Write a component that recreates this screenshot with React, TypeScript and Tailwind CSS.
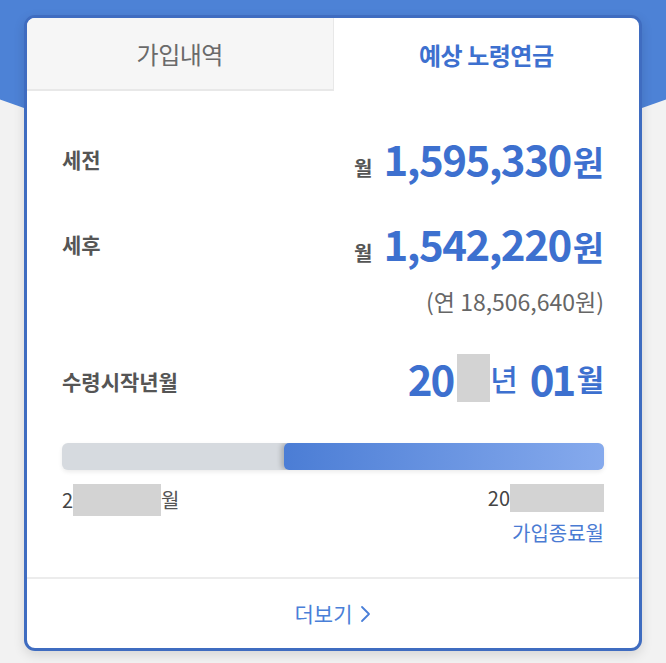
import React from "react";

const Masked = ({ className }: { className: string }) => (
  <span className={`inline-block bg-[#d3d3d3] ${className}`} />
);

export default function App() {
  return (
    <div
      className="relative w-[666px] h-[663px] overflow-hidden bg-[#f2f2f2]"
      style={{ fontFamily: '"Noto Sans CJK KR", "Noto Sans", sans-serif' }}
    >
      {/* blue header background with curved bottom */}
      <div className="absolute left-[-267px] top-[-516px] w-[1200px] h-[672px] rounded-[50%] bg-[#4d82d6]" />

      <div className="relative pt-[15px] px-[24px]">
        <div className="bg-white border-[3px] border-[#3f6cc0] rounded-[11px] overflow-hidden shadow-[0_4px_12px_rgba(0,0,0,0.12)]">
          {/* tabs */}
          <div className="flex h-[73px]">
            <div className="flex-1 flex items-center justify-center bg-[#f6f6f6] border-b-2 border-r border-[#e8e8e8] text-[24px] text-[#6a6a6a] tracking-[-0.5px]">
              가입내역
            </div>
            <div className="flex-1 flex items-center justify-center text-[24px] font-bold text-[#3d70cf] tracking-[-0.5px]">
              예상 노령연금
            </div>
          </div>

          <div className="px-[35px] pt-[44px]">
            {/* 세전 */}
            <div className="flex items-center justify-between h-[50px]">
              <span className="text-[21px] font-bold text-[#555]">세전</span>
              <div className="flex items-baseline text-[#3d70cf] font-bold">
                <span className="text-[20px] text-[#555] mr-[11px]">월</span>
                <span className="text-[42px] leading-none tracking-[-1.5px]">1,595,330</span>
                <span className="text-[34px] leading-none ml-[2px]">원</span>
              </div>
            </div>

            {/* 세후 */}
            <div className="flex items-center justify-between h-[50px] mt-[35px]">
              <span className="text-[21px] font-bold text-[#555]">세후</span>
              <div className="flex items-baseline text-[#3d70cf] font-bold">
                <span className="text-[20px] text-[#555] mr-[11px]">월</span>
                <span className="text-[42px] leading-none tracking-[-1.5px]">1,542,220</span>
                <span className="text-[34px] leading-none ml-[2px]">원</span>
              </div>
            </div>
            <div className="text-right text-[23px] text-[#666] leading-[24px] mt-[19px]">
              (연 18,506,640원)
            </div>

            {/* 수령시작년월 */}
            <div className="flex items-center justify-between h-[52px] mt-[39px]">
              <span className="text-[21px] font-bold text-[#555] mt-[8px]">수령시작년월</span>
              <div className="flex items-center text-[#3d70cf] font-bold text-[42px] leading-none">
                <span className="tracking-[-2px]">20</span>
                <Masked className="w-[33px] h-[48px] ml-[4px]" />
                <span className="text-[30px] font-medium">년</span>
                <span className="ml-[12px] tracking-[-3px]">01</span>
                <span className="text-[30px] ml-[3px]">월</span>
              </div>
            </div>

            {/* progress */}
            <div className="mt-[39px] flex h-[27px] rounded-[6px] overflow-hidden bg-[#d6dadf] shadow-[0_2px_4px_rgba(0,0,0,0.08)]">
              <div className="w-[222px]" />
              <div className="flex-1 rounded-[5px] bg-gradient-to-r from-[#4b7dd5] to-[#86aaed] shadow-[-3px_0_5px_rgba(0,0,0,0.2)]" />
            </div>

            <div className="flex justify-between mt-[14px] h-[32px] text-[20px] text-[#444]">
              <div className="flex items-center leading-none">
                <span>2</span>
                <Masked className="w-[88px] h-[32px]" />
                <span className="text-[#555]">월</span>
              </div>
              <div className="flex items-start leading-none">
                <span className="mt-[4px]">20</span>
                <Masked className="w-[94px] h-[28px]" />
              </div>
            </div>
            <div className="text-right text-[20px] text-[#4a7bd3] leading-none mt-[7px]">가입종료월</div>
          </div>

          {/* more */}
          <div className="mt-[34px] border-t-2 border-[#ececec] h-[71px] flex items-center justify-center gap-[8px] text-[21px] text-[#4a7fd8]">
            <span>더보기</span>
            <svg width="11" height="18" viewBox="0 0 11 18" fill="none">
              <path d="M2 2 L9 9 L2 16" stroke="#4a7fd8" strokeWidth="1.8" strokeLinecap="round" strokeLinejoin="round" />
            </svg>
          </div>
        </div>
      </div>
    </div>
  );
}
